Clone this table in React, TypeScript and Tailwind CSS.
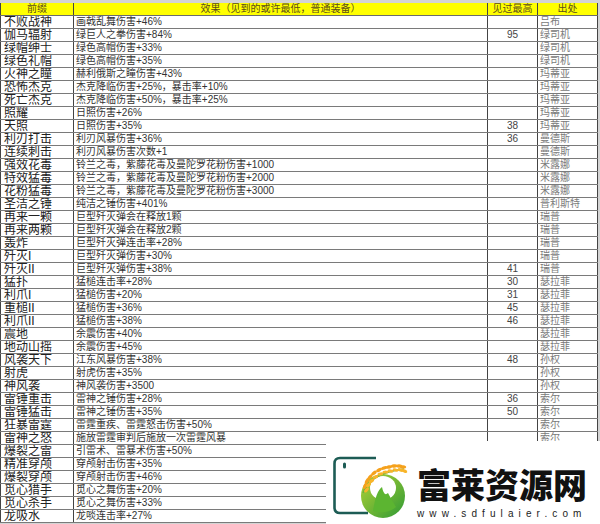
import React from "react";

type Row = { prefix: string; effect: string; max?: string; source?: string };

const ROWS: Row[] = [
  { prefix: "不败战神", effect: "画戟乱舞伤害+46%", source: "吕布" },
  { prefix: "伽马辐射", effect: "绿巨人之拳伤害+84%", max: "95", source: "绿司机" },
  { prefix: "绿帽绅士", effect: "绿色高帽伤害+33%", source: "绿司机" },
  { prefix: "绿色礼帽", effect: "绿色高帽伤害+35%", source: "绿司机" },
  { prefix: "火神之瞳", effect: "赫利俄斯之瞳伤害+43%", source: "玛蒂亚" },
  { prefix: "恐怖杰克", effect: "杰克降临伤害+25%，暴击率+10%", source: "玛蒂亚" },
  { prefix: "死亡杰克", effect: "杰克降临伤害+50%，暴击率+25%", source: "玛蒂亚" },
  { prefix: "照耀", effect: "日照伤害+26%", source: "玛蒂亚" },
  { prefix: "天照", effect: "日照伤害+35%", max: "38", source: "玛蒂亚" },
  { prefix: "利刃打击", effect: "利刃风暴伤害+36%", max: "36", source: "曼德斯" },
  { prefix: "连续刺击", effect: "利刃风暴伤害次数+1", source: "曼德斯" },
  { prefix: "强效花毒", effect: "铃兰之毒，紫藤花毒及曼陀罗花粉伤害+1000", source: "米露娜" },
  { prefix: "特效猛毒", effect: "铃兰之毒，紫藤花毒及曼陀罗花粉伤害+2000", source: "米露娜" },
  { prefix: "花粉猛毒", effect: "铃兰之毒，紫藤花毒及曼陀罗花粉伤害+3000", source: "米露娜" },
  { prefix: "圣洁之锤", effect: "纯洁之锤伤害+401%", source: "普利斯特" },
  { prefix: "再来一颗", effect: "巨型歼灭弹会在释放1颗", source: "瑞普" },
  { prefix: "再来两颗", effect: "巨型歼灭弹会在释放2颗", source: "瑞普" },
  { prefix: "轰炸", effect: "巨型歼灭弹连击率+28%", source: "瑞普" },
  { prefix: "歼灭I", effect: "巨型歼灭弹伤害+30%", source: "瑞普" },
  { prefix: "歼灭II", effect: "巨型歼灭弹伤害+38%", max: "41", source: "瑞普" },
  { prefix: "猛扑", effect: "猛槌连击率+28%", max: "30", source: "瑟拉菲" },
  { prefix: "利爪I", effect: "猛槌伤害+20%", max: "31", source: "瑟拉菲" },
  { prefix: "重槌II", effect: "猛槌伤害+36%", max: "45", source: "瑟拉菲" },
  { prefix: "利爪II", effect: "猛槌伤害+38%", max: "46", source: "瑟拉菲" },
  { prefix: "震地", effect: "余震伤害+40%", source: "瑟拉菲" },
  { prefix: "地动山摇", effect: "余震伤害+45%", source: "瑟拉菲" },
  { prefix: "风袭天下", effect: "江东风暴伤害+38%", max: "48", source: "孙权" },
  { prefix: "射虎", effect: "射虎伤害+35%", source: "孙权" },
  { prefix: "神风袭", effect: "神风袭伤害+3500", source: "孙权" },
  { prefix: "雷锤重击", effect: "雷神之锤伤害+28%", max: "36", source: "索尔" },
  { prefix: "雷锤猛击", effect: "雷神之锤伤害+35%", max: "50", source: "索尔" },
  { prefix: "狂暴雷霆", effect: "雷霆重疾、雷霆怒击伤害+50%", source: "索尔" },
  { prefix: "雷神之怒", effect: "施放雷霆审判后施放一次雷霆风暴", source: "索尔" },
  // rows below sit under the watermark, their right side isn't visible
  { prefix: "爆裂之雷", effect: "引雷术、雷暴术伤害+50%" },
  { prefix: "精准穿颅", effect: "穿颅射击伤害+35%" },
  { prefix: "爆裂穿颅", effect: "穿颅射击伤害+46%" },
  { prefix: "觅心猎手", effect: "觅心之舞伤害+20%" },
  { prefix: "觅心杀手", effect: "觅心之舞伤害+33%" },
  { prefix: "龙吸水", effect: "龙啖连击率+27%" },
];

const FONT = { fontFamily: "'Liberation Sans', 'Noto Sans CJK SC', sans-serif" };

function Logo() {
  return (
    <svg width="90" height="83" viewBox="0 0 90 83">
      <defs>
        <linearGradient id="g" x1="0" y1="0" x2="1" y2="1">
          <stop offset="0" stopColor="#b5d335" />
          <stop offset="1" stopColor="#2f9a35" />
        </linearGradient>
      </defs>
      {/* frame */}
      <path d="M50 17 H14 Q8.5 17 8.5 22.5 V66.5 Q8.5 72 14 72 H42" fill="none" stroke="#1d5c55" strokeWidth="2.6" />
      <rect x="17" y="21.5" width="3" height="6" rx="1.5" fill="#1d5c55" />
      {/* circle */}
      <circle cx="57" cy="55" r="22" fill="url(#g)" />
      <ellipse cx="57" cy="47" rx="13" ry="12" fill="#ffffff" />
      <path d="M47 70 Q50 50 56 46 Q58 56 62 52 Q66 60 70 66 Q60 74 47 70 Z" fill="#5cb531" />
      {/* wheat */}
      <path d="M37 52 Q44 32 78 28" fill="none" stroke="#6db33f" strokeWidth="1.6" />
      {[
        [39, 47, -70], [41, 42, -60], [44, 38, -50], [48, 34, -40], [53, 31, -30],
        [58, 29, -20], [63, 28, -12], [68, 27, -6], [73, 27, 0], [77, 28, 5],
      ].map(([x, y, r], i) => (
        <g key={i}>
          <ellipse cx={x} cy={y - 2} rx="3.2" ry="1.7" transform={`rotate(${r} ${x} ${y - 2})`} fill="#f5a11c" />
          <ellipse cx={x + 1.5} cy={y + 2} rx="3" ry="1.6" transform={`rotate(${r + 20} ${x + 1.5} ${y + 2})`} fill="#f8b52a" />
        </g>
      ))}
    </svg>
  );
}

export default function App() {
  return (
    <div className="relative h-[524px] w-[600px] overflow-hidden bg-[#d4d4d4] pt-[3px]" style={FONT}>
      <div className="w-[598px] bg-white">
        {/* header */}
        <div className="grid h-[13px] grid-cols-[74px_414px_50px_60px] border-b border-[#6b6b6b] bg-[#ffff00] text-[10px] leading-[12px] text-[#5a4b1b]">
          <div className="border-x border-[#444] text-center">前缀</div>
          <div className="border-r border-[#444] text-center">效果（见到的或许最低，普通装备）</div>
          <div className="border-r border-[#444] text-center">见过最高</div>
          <div className="border-r border-[#444] text-center">出处</div>
        </div>

        {ROWS.map((r, i) => (
          <div
            key={i}
            className="grid h-[13px] grid-cols-[74px_414px_50px_60px] border-b border-[#7a7a7a] leading-[12px] whitespace-nowrap"
          >
            <div className="overflow-hidden border-x border-[#444] pl-[3px] text-[12px] text-[#222]">{r.prefix}</div>
            <div className="overflow-hidden border-r border-[#444] pl-[2px] text-[10px] text-[#333]">{r.effect}</div>
            <div className="border-r border-[#444] text-center text-[10px] text-[#444]">{r.max}</div>
            <div className="overflow-hidden border-r border-[#444] pl-[2px] text-[10px] text-[#7a7a7a]">{r.source}</div>
          </div>
        ))}
      </div>

      {/* watermark */}
      <div className="absolute left-[326px] top-[441px] flex h-[83px] w-[274px] bg-white">
        <Logo />
        <div className="flex flex-col pl-[1px] pt-[26px]">
          <div className="text-[34px] font-black leading-[34px] text-[#111]" style={{ fontFamily: "'Noto Sans CJK SC', sans-serif" }}>
            富莱资源网
          </div>
          <div className="mt-[7px] text-[10px] leading-[11px] tracking-[5.1px] text-[#222]">www.sdfulaier.com</div>
        </div>
      </div>
    </div>
  );
}
